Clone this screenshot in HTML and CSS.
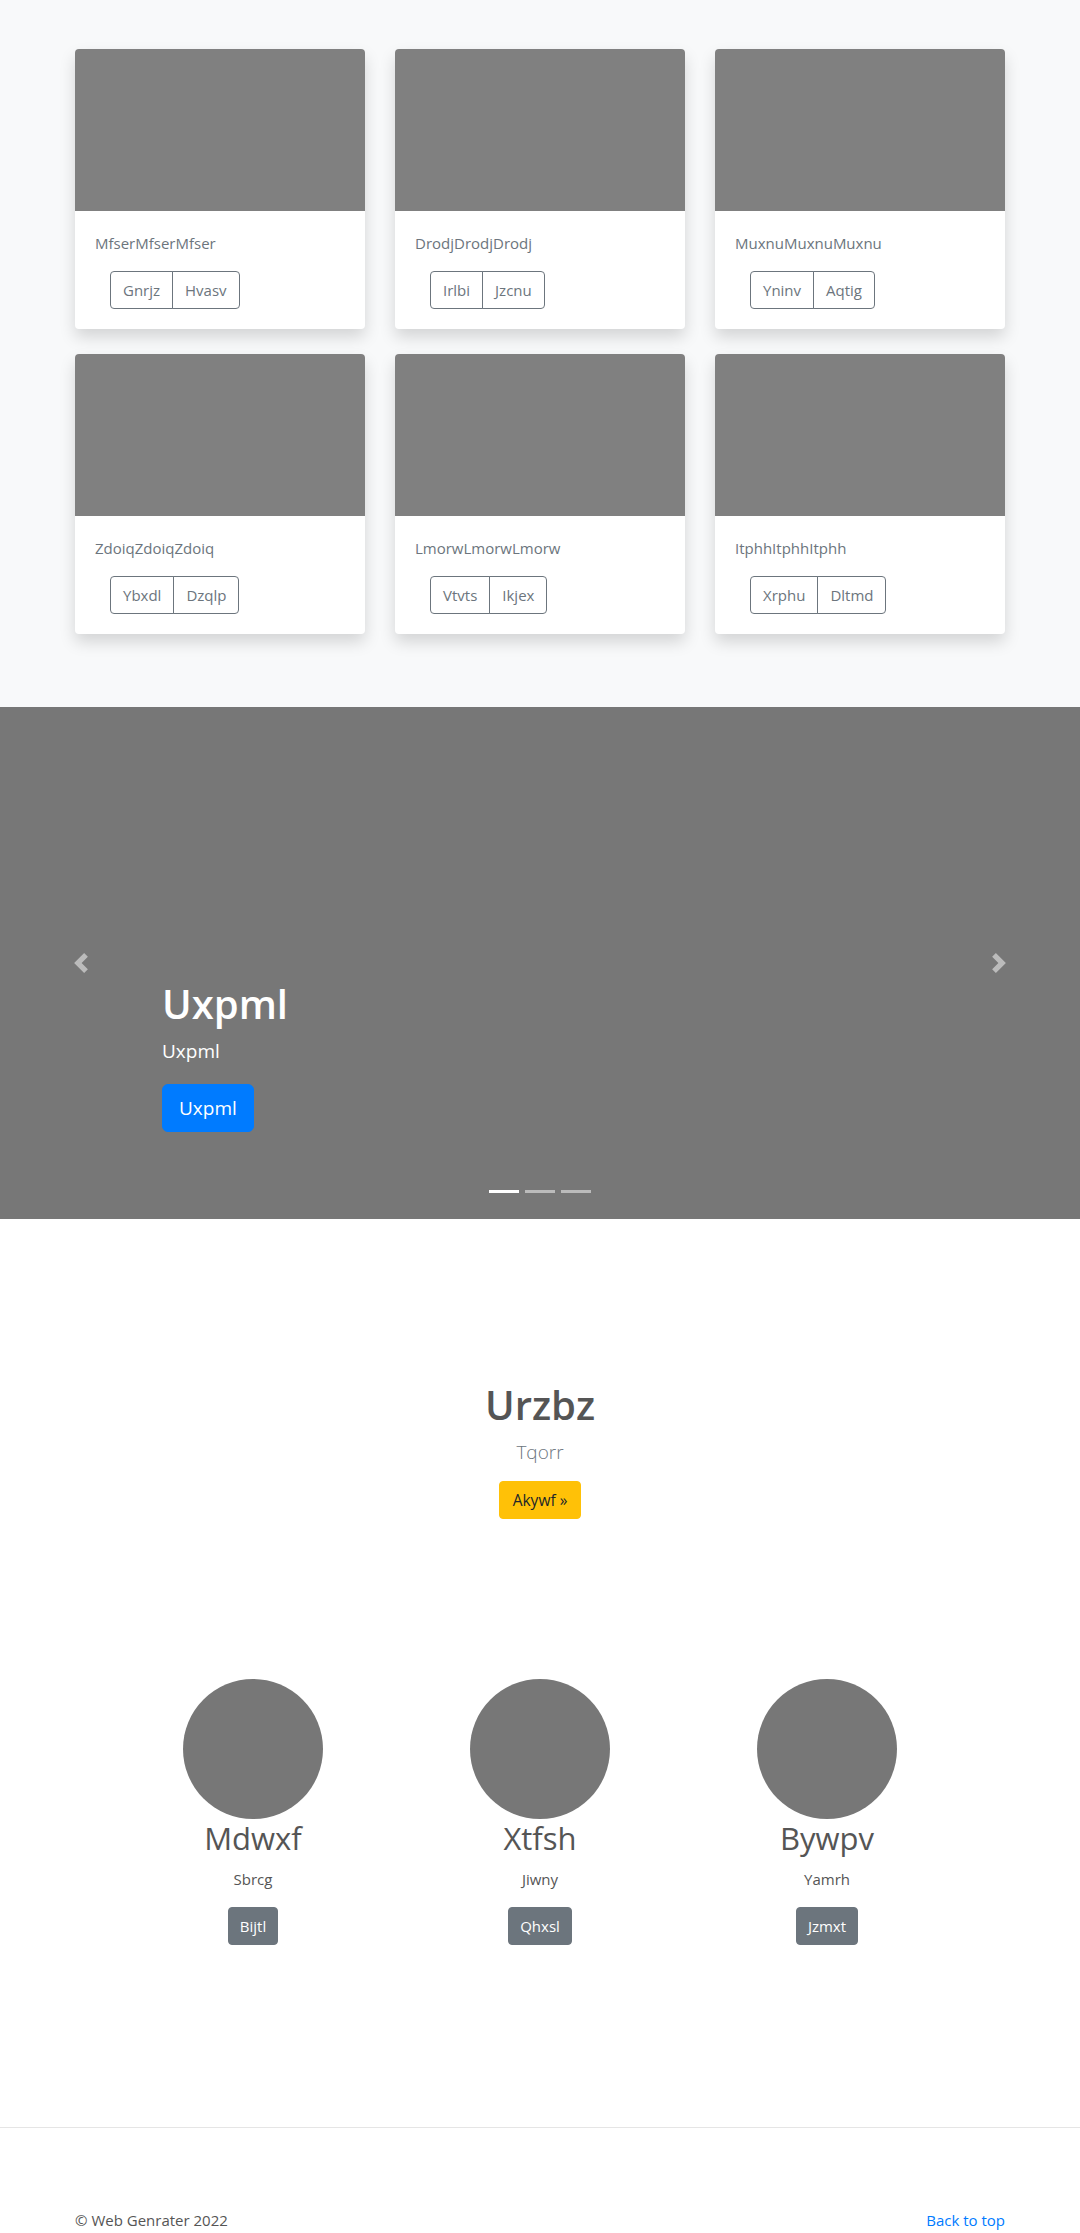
FILE: index.html
```
<!DOCTYPE html>
<html lang="en">
<head>
<meta charset="utf-8">
<title>Album</title>
<link rel="stylesheet" href="styles.css">
</head>
<body>
<main>
  <section class="album">
    <div class="container grid">
      <div class="card"><div class="card-img"></div><div class="card-body"><p class="card-text">MfserMfserMfser</p><div class="btn-group"><button class="btn-o">Gnrjz</button><button class="btn-o">Hvasv</button></div></div></div>
      <div class="card"><div class="card-img"></div><div class="card-body"><p class="card-text">DrodjDrodjDrodj</p><div class="btn-group"><button class="btn-o">Irlbi</button><button class="btn-o">Jzcnu</button></div></div></div>
      <div class="card"><div class="card-img"></div><div class="card-body"><p class="card-text">MuxnuMuxnuMuxnu</p><div class="btn-group"><button class="btn-o">Yninv</button><button class="btn-o">Aqtig</button></div></div></div>
      <div class="card"><div class="card-img"></div><div class="card-body"><p class="card-text">ZdoiqZdoiqZdoiq</p><div class="btn-group"><button class="btn-o">Ybxdl</button><button class="btn-o">Dzqlp</button></div></div></div>
      <div class="card"><div class="card-img"></div><div class="card-body"><p class="card-text">LmorwLmorwLmorw</p><div class="btn-group"><button class="btn-o">Vtvts</button><button class="btn-o">Ikjex</button></div></div></div>
      <div class="card"><div class="card-img"></div><div class="card-body"><p class="card-text">ItphhItphhItphh</p><div class="btn-group"><button class="btn-o">Xrphu</button><button class="btn-o">Dltmd</button></div></div></div>
    </div>
  </section>

  <section class="carousel">
    <a class="ctrl ctrl-prev" href="#"><svg width="20" height="20" viewBox="0 0 8 8"><path fill="#fff" d="M5.25 0l-4 4 4 4 1.5-1.5L4.25 4l2.5-2.5L5.25 0z"/></svg></a>
    <div class="caption">
      <h1 class="cap-title">Uxpml</h1>
      <p class="cap-lead">Uxpml</p>
      <a class="btn-lg" href="#">Uxpml</a>
    </div>
    <a class="ctrl ctrl-next" href="#"><svg width="20" height="20" viewBox="0 0 8 8"><path fill="#fff" d="M2.75 0l-1.5 1.5L3.75 4l-2.5 2.5L2.75 8l4-4-4-4z"/></svg></a>
    <ol class="indicators"><li class="active"></li><li></li><li></li></ol>
  </section>

  <section class="jumbo">
    <h1 class="jumbo-title">Urzbz</h1>
    <p class="jumbo-lead">Tqorr</p>
    <a class="btn-warning" href="#">Akywf »</a>
  </section>

  <section class="marketing">
    <div class="feature"><div class="circle"></div><h2 class="feat-title">Mdwxf</h2><p class="feat-text">Sbrcg</p><a class="btn-sec" href="#">Bijtl</a></div>
    <div class="feature"><div class="circle"></div><h2 class="feat-title">Xtfsh</h2><p class="feat-text">Jiwny</p><a class="btn-sec" href="#">Qhxsl</a></div>
    <div class="feature"><div class="circle"></div><h2 class="feat-title">Bywpv</h2><p class="feat-text">Yamrh</p><a class="btn-sec" href="#">Jzmxt</a></div>
  </section>
</main>
<footer class="footer">
  <div class="container footer-row">
    <p class="copy">© Web Genrater 2022</p>
    <a class="top-link" href="#">Back to top</a>
  </div>
</footer>
</body>
</html>
```
FILE: styles.css
```
* { box-sizing: border-box; }
html, body { margin: 0; padding: 0; }
body {
  font-family: "Open Sans", "Noto Sans", sans-serif;
  font-size: 16px;
  line-height: 1.5;
  color: #212529;
  background: #fff;
}
p, h1, h2 { margin: 0; }
a { text-decoration: none; }

.container { width: 930px; margin: 0 auto; }

.album { background: #f8f9fa; padding: 49px 0 73px; }
.grid { display: grid; grid-template-columns: repeat(3, 290px); column-gap: 30px; row-gap: 25px; }
.card {
  background: #fff;
  border-radius: 4px;
  overflow: hidden;
  box-shadow: 0 8px 16px rgba(0,0,0,0.15);
}
.card-img { height: 162px; background: #808080; }
.card-body { padding: 20px; }
.card-text { color: #6c757d; font-size: 15px; line-height: 24px; margin-bottom: 16px; }
.btn-group { display: inline-flex; margin-left: 15px; }
.btn-o {
  font-family: inherit;
  font-size: 15px;
  line-height: 24px;
  color: #6c757d;
  background: transparent;
  border: 1px solid #6c757d;
  padding: 6px 12px;
  height: 38px;
}
.btn-o:first-child { border-radius: 4px 0 0 4px; }
.btn-o:last-child { border-radius: 0 4px 4px 0; margin-left: -1px; }

.carousel {
  position: relative;
  height: 512px;
  background: #777;
  padding: 273px 0 0 162px;
}
.cap-title { color: #fff; font-size: 40px; font-weight: 600; line-height: 48px; margin-bottom: 8px; }
.cap-lead { color: #fff; font-size: 19px; line-height: 30px; margin-bottom: 18px; }
.btn-lg {
  display: inline-block;
  background: #007bff;
  color: #fff;
  font-size: 19px;
  line-height: 30px;
  padding: 8px 16px;
  border: 1px solid #007bff;
  border-radius: 6px;
}
.ctrl {
  position: absolute;
  top: 0;
  bottom: 0;
  width: 162px;
  display: flex;
  align-items: center;
  justify-content: center;
  opacity: 0.5;
}
.ctrl-prev { left: 0; }
.ctrl-next { right: 0; }
.indicators {
  position: absolute;
  left: 0;
  right: 0;
  bottom: 26px;
  margin: 0;
  padding: 0;
  list-style: none;
  display: flex;
  justify-content: center;
  gap: 6px;
}
.indicators li { width: 30px; height: 3px; background: #fff; opacity: 0.5; }
.indicators li.active { opacity: 1; }

.jumbo { text-align: center; padding: 162px 0 0; }
.jumbo-title { font-size: 40px; line-height: 48px; font-weight: 600; color: #555; margin-bottom: 8px; }
.jumbo-lead { font-size: 19px; line-height: 30px; font-weight: 300; color: #6c757d; margin-bottom: 14px; }
.btn-warning {
  display: inline-block;
  background: #ffc107;
  color: #212529;
  font-size: 15.5px;
  line-height: 24px;
  padding: 6px 13px;
  border: 1px solid #ffc107;
  border-radius: 4px;
}

.marketing {
  width: 861px;
  margin: 0 auto;
  padding-top: 160px;
  display: grid;
  grid-template-columns: repeat(3, 1fr);
  text-align: center;
}
.circle { width: 140px; height: 140px; border-radius: 50%; background: #777; margin: 0 auto; }
.feat-title { font-size: 31px; line-height: 38px; font-weight: 400; color: #555; margin-bottom: 10px; }
.feat-text { font-size: 15px; line-height: 24px; color: #555; margin-bottom: 16px; }
.btn-sec {
  display: inline-block;
  background: #6c757d;
  color: #fff;
  font-size: 15px;
  line-height: 24px;
  padding: 6px 11px;
  border: 1px solid #6c757d;
  border-radius: 4px;
}

.footer { margin-top: 182px; border-top: 1px solid #e5e5e5; padding-top: 80px; }
.footer-row { display: flex; justify-content: space-between; align-items: center; }
.copy { color: #555; font-size: 15px; line-height: 24px; }
.top-link { color: #007bff; font-size: 15px; line-height: 24px; }
```
